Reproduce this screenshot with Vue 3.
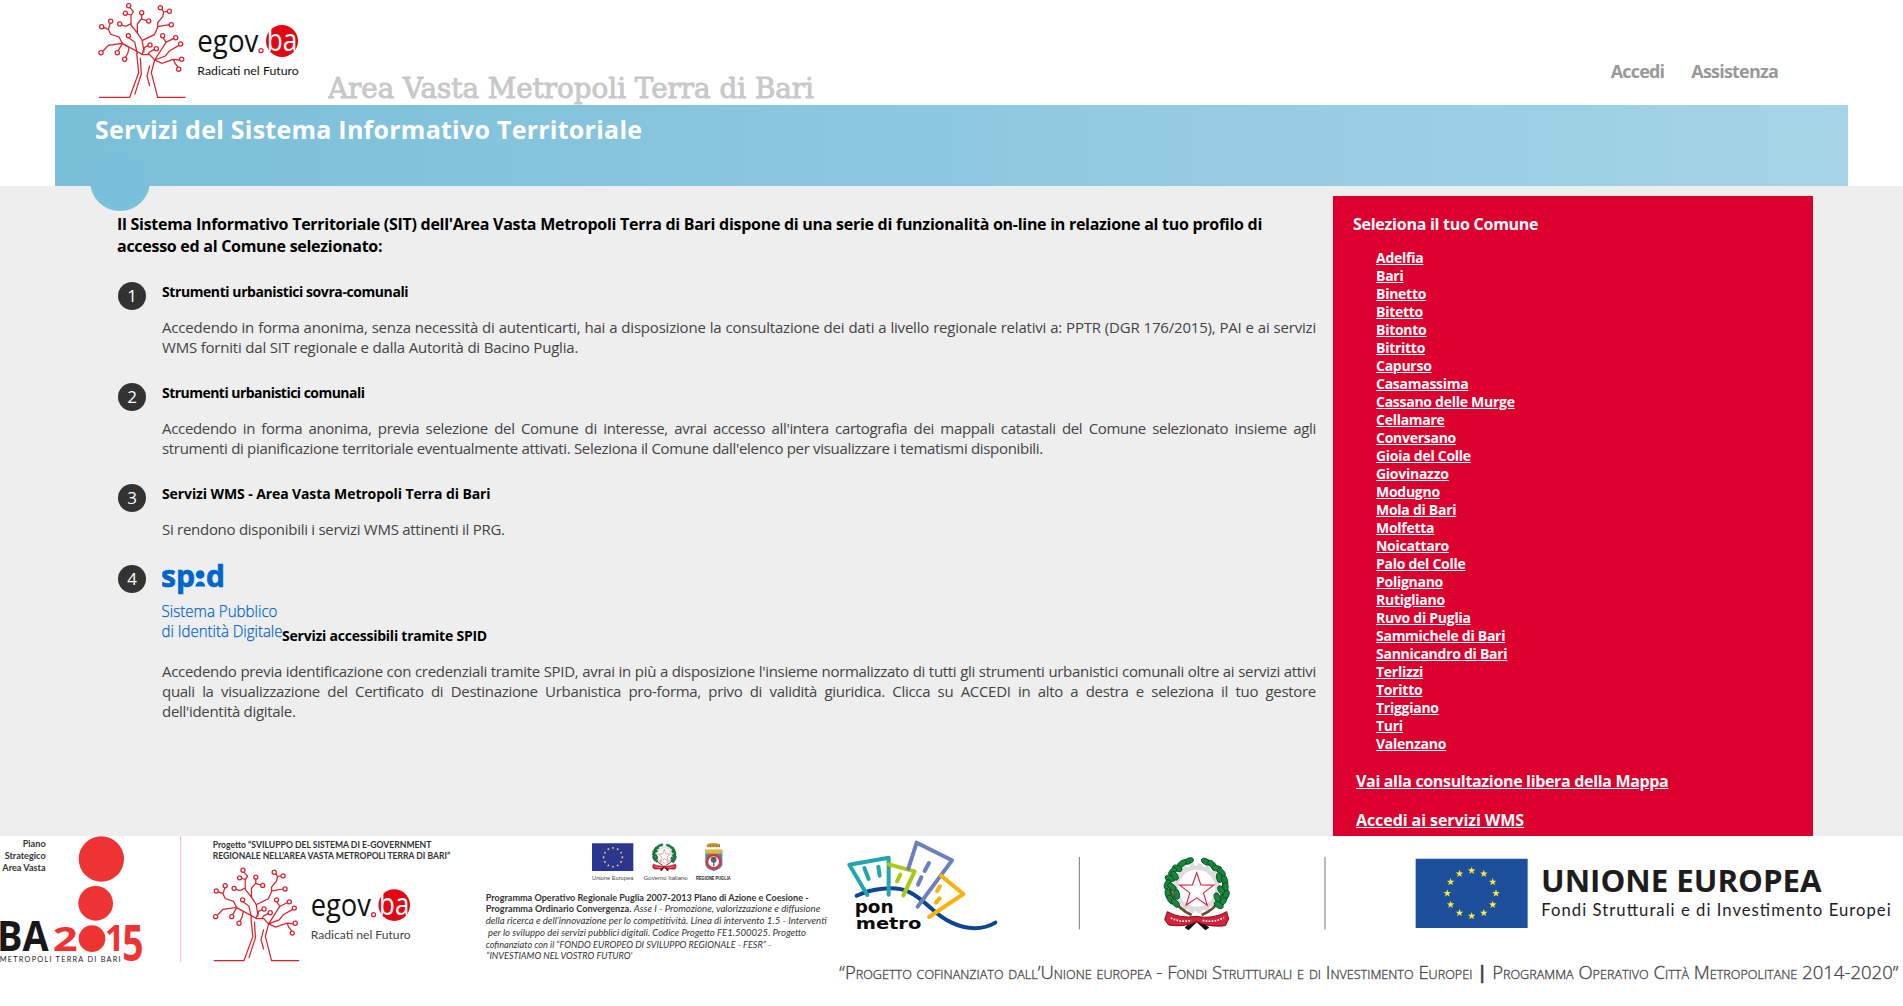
<script setup>
const comuni = [
  'Adelfia', 'Bari', 'Binetto', 'Bitetto', 'Bitonto', 'Bitritto', 'Capurso', 'Casamassima',
  'Cassano delle Murge', 'Cellamare', 'Conversano', 'Gioia del Colle', 'Giovinazzo', 'Modugno',
  'Mola di Bari', 'Molfetta', 'Noicattaro', 'Palo del Colle', 'Polignano', 'Rutigliano',
  'Ruvo di Puglia', 'Sammichele di Bari', 'Sannicandro di Bari', 'Terlizzi', 'Toritto',
  'Triggiano', 'Turi', 'Valenzano',
]

// track / textTrack: letter spacing in px of the title and of its paragraph
const services = [
  {
    n: 1,
    track: -0.42,
    textTrack: -0.2,
    title: 'Strumenti urbanistici sovra-comunali',
    text: 'Accedendo in forma anonima, senza necessità di autenticarti, hai a disposizione la consultazione dei dati a livello regionale relativi a: PPTR (DGR 176/2015), PAI e ai servizi WMS forniti dal SIT regionale e dalla Autorità di Bacino Puglia.',
  },
  {
    n: 2,
    track: -0.53,
    textTrack: -0.32,
    title: 'Strumenti urbanistici comunali',
    text: "Accedendo in forma anonima, previa selezione del Comune di interesse, avrai accesso all'intera cartografia dei mappali catastali del Comune selezionato insieme agli strumenti di pianificazione territoriale eventualmente attivati. Seleziona il Comune dall'elenco per visualizzare i tematismi disponibili.",
  },
  {
    n: 3,
    track: -0.1,
    textTrack: -0.28,
    title: 'Servizi WMS - Area Vasta Metropoli Terra di Bari',
    text: 'Si rendono disponibili i servizi WMS attinenti il PRG.',
  },
  {
    n: 4,
    spid: true,
    track: -0.23,
    textTrack: -0.3,
    title: 'Servizi accessibili tramite SPID',
    text: "Accedendo previa identificazione con credenziali tramite SPID, avrai in più a disposizione l'insieme normalizzato di tutti gli strumenti urbanistici comunali oltre ai servizi attivi quali la visualizzazione del Certificato di Destinazione Urbanistica pro-forma, privo di validità giuridica. Clicca su ACCEDI in alto a destra e seleziona il tuo gestore dell'identità\u00a0digitale.",
  },
]

const treeNodes = [
  [235, 17], [225, 40], [274, 38], [330, 23], [357, 34], [181, 64], [154, 80], [208, 72],
  [295, 63], [363, 74], [234, 107], [337, 107], [376, 113], [391, 132], [299, 135],
  [152, 158], [201, 158], [318, 146], [223, 178], [394, 178], [385, 208],
]

// Five-pointed star outline around a centre point
function star(cx, cy, r, inner = 0.4) {
  const pts = []
  for (let i = 0; i < 10; i++) {
    const a = (Math.PI / 5) * i - Math.PI / 2
    const k = i % 2 ? r * inner : r
    pts.push(`${(cx + k * Math.cos(a)).toFixed(1)},${(cy + k * Math.sin(a)).toFixed(1)}`)
  }
  return pts.join(' ')
}

// Twelve stars on an ellipse, as on the European flag
function ring(cx, cy, rx, ry, r) {
  return Array.from({ length: 12 }, (_, i) => {
    const a = (Math.PI / 6) * i
    return star(cx + rx * Math.cos(a), cy + ry * Math.sin(a), r)
  })
}

const smallRing = ring(429, 97, 28, 28, 4.5)
const bigRing = ring(1925, 205, 73, 68, 12)

// Olive and oak leaves of the Italian emblem: x, y, rotation
const leaves = [
  [1076, 106, -20], [1056, 114, -35], [1042, 128, 20], [1028, 138, -50], [1020, 158, 15],
  [1034, 150, 60], [1012, 176, -70], [1026, 184, 40], [1014, 204, 80], [1022, 222, 55],
  [1036, 232, 50], [1040, 206, 80], [1128, 108, 25], [1146, 116, 40], [1160, 128, 10],
  [1174, 140, 50], [1168, 156, 80], [1184, 164, 75], [1186, 186, 95], [1174, 194, 60],
  [1188, 208, 110], [1178, 228, 130], [1162, 216, 70], [1166, 238, 30],
]
const beads = [0, 1, 2, 3, 4]
</script>

<template>
  <div class="page">
    <svg class="defs" width="0" height="0" aria-hidden="true">
      <symbol id="egov" viewBox="140 0 620 300">
        <g class="tree">
          <path d="M146 292H238L265 218 259 160 M270 173 273 222 253 284 M406 292H322L303 218 313 180 M298 197 290 228 298 258" />
          <path d="M180 70 174 88 181 103 206 111 216 130 277 164H298L313 180 335 190 368 178 388 180 M160 82 174 88 M158 153 174 136 216 130 204 152 M216 131 236 142 233 158 226 172" />
          <path d="M238 22 249 35 242 46V75L260 98 275 120 280 148 275 164 M231 42 242 45 M214 75 226 79 242 71 M274 44V56L261 72V98 M274 57 289 62 M235 113 253 126 261 162" />
          <path d="M335 28 340 36 337 50 322 68V82L312 104 275 122 M340 36 350 34 M322 80 357 74 M293 137 282 142 280 158 M312 148 298 156 292 164" />
          <path d="M338 113 347 127 313 180 M370 115 347 127 M386 136 358 152 345 168 313 180 M370 179 374 190 383 201" />
          <circle v-for="(p, i) in treeNodes" :key="i" :cx="p[0]" :cy="p[1]" r="6.3" />
          <circle cx="632" cy="152" r="6" />
        </g>
        <circle cx="695" cy="123" r="48" fill="#e30613" />
        <text class="os" x="441" y="155" font-size="92" textLength="183" lengthAdjust="spacingAndGlyphs" fill="#111">egov</text>
        <text class="os" x="649" y="153" font-size="92" textLength="92" lengthAdjust="spacingAndGlyphs" fill="#fff">ba</text>
        <text class="lato" x="441" y="226" font-size="36" textLength="304" lengthAdjust="spacingAndGlyphs" fill="currentColor">Radicati nel Futuro</text>
      </symbol>
      <symbol id="emblem" viewBox="1000 90 200 230">
        <circle cx="1100" cy="188" r="62" fill="none" stroke="#dcdcde" stroke-width="13" />
        <circle cx="1100" cy="188" r="71" fill="none" stroke="#dcdcde" stroke-width="9" stroke-dasharray="13 11" />
        <path d="M1022 150Q1010 235 1085 268 M1178 150Q1192 235 1115 268" fill="none" stroke="#6d4a33" stroke-width="8" />
        <ellipse v-for="(l, i) in leaves" :key="i" :cx="l[0]" :cy="l[1]" rx="15" ry="8.5" :transform="`rotate(${l[2]} ${l[0]} ${l[1]})`" fill="#128a3c" stroke="#0c4722" stroke-width="2.5" />
        <polygon :points="star(1100, 195, 54)" fill="#fff" stroke="#dc2440" stroke-width="3.5" />
        <path d="M1085 284 1064 306 1076 314 1100 290 1126 314 1138 306 1114 284Z" fill="#151515" />
        <path d="M1012 258Q1052 280 1098 272Q1148 282 1190 258L1196 280 1186 300Q1140 306 1100 288Q1060 306 1016 298L1004 282Z" fill="#d8203a" stroke="#7c1020" stroke-width="3" />
        <path d="M1022 277Q1055 292 1084 284 M1118 284Q1150 292 1182 276" fill="none" stroke="#fff" stroke-width="5" stroke-dasharray="5 4" />
      </symbol>
    </svg>

    <header class="top">
      <svg class="logo" viewBox="140 0 620 300"><use href="#egov" x="140" y="0" width="620" height="300" /></svg>
      <svg class="area" viewBox="0 0 490 35">
        <text x="0" y="28" font-size="28" textLength="486" lengthAdjust="spacingAndGlyphs">Area Vasta Metropoli Terra di Bari</text>
      </svg>
      <nav class="nav">
        <a>Accedi</a>
        <a>Assistenza</a>
      </nav>
    </header>

    <div class="band"><h1>Servizi del Sistema Informativo Territoriale</h1></div>

    <main class="main">
      <section class="content">
        <p class="intro">Il Sistema Informativo Territoriale (SIT) dell'Area Vasta Metropoli Terra di Bari dispone di una serie di funzionalità on-line in relazione al tuo profilo di<br />accesso ed al Comune selezionato:</p>
        <article v-for="s in services" :key="s.n" class="service">
          <span class="num">{{ s.n }}</span>
          <div class="body">
            <h2>
              <svg v-if="s.spid" class="spid" viewBox="0 0 121 80">
                <g class="ti" font-weight="700" stroke="#06c" stroke-width="0.7">
                  <text x="-1" y="24" font-size="31" textLength="34" lengthAdjust="spacingAndGlyphs">sp</text>
                  <text x="44" y="24" font-size="31" textLength="19" lengthAdjust="spacingAndGlyphs">d</text>
                </g>
                <circle cx="38.2" cy="11.5" r="4.3" />
                <path d="M33.3 23.5Q34.3 18.6 38.3 18.6T43.3 23.5Z" />
                <g class="ti" font-size="16.5" font-weight="300" stroke="#06c" stroke-width="0.25">
                  <text x="-0.5" y="53.5" textLength="116" lengthAdjust="spacingAndGlyphs">Sistema Pubblico</text>
                  <text x="-0.5" y="73.5" textLength="121" lengthAdjust="spacingAndGlyphs">di Identità Digitale</text>
                </g>
              </svg>
              <span :style="{ letterSpacing: s.track + 'px' }">{{ s.title }}</span>
            </h2>
            <p :style="{ letterSpacing: s.textTrack + 'px' }">{{ s.text }}</p>
          </div>
        </article>
      </section>

      <aside class="panel">
        <h3>Seleziona il tuo Comune</h3>
        <ul>
          <li v-for="c in comuni" :key="c"><a>{{ c }}</a></li>
        </ul>
        <a class="more map">Vai alla consultazione libera della Mappa</a>
        <a class="more wms">Accedi ai servizi WMS</a>
      </aside>
    </main>

    <footer class="foot">
      <svg class="f-left" viewBox="0 33 1440 510">
        <g class="lato" font-weight="700" font-size="27" fill="#333">
          <text x="68" y="67" textLength="69" lengthAdjust="spacingAndGlyphs">Piano</text>
          <text x="14" y="103" textLength="123" lengthAdjust="spacingAndGlyphs">Strategico</text>
          <text x="7" y="138" textLength="130" lengthAdjust="spacingAndGlyphs">Area Vasta</text>
          <text x="638" y="68" textLength="656" lengthAdjust="spacingAndGlyphs">Progetto “SVILUPPO DEL SISTEMA DI E-GOVERNMENT</text>
          <text x="638" y="103" textLength="713" lengthAdjust="spacingAndGlyphs">REGIONALE NELL’AREA VASTA METROPOLI TERRA DI BARI”</text>
        </g>
        <g fill="#ee3432">
          <circle cx="304" cy="102" r="68" />
          <circle cx="287" cy="235" r="52" />
          <circle cx="276" cy="341" r="40" />
          <g class="os" font-weight="700">
            <text x="158" y="378" font-size="104" textLength="75" lengthAdjust="spacingAndGlyphs">2</text>
            <text x="315" y="378" font-size="106" textLength="58" lengthAdjust="spacingAndGlyphs">1</text>
            <text x="367" y="409" font-size="148" textLength="64" lengthAdjust="spacingAndGlyphs">5</text>
          </g>
        </g>
        <text class="os" x="-9" y="378" font-size="123" font-weight="700" textLength="155" lengthAdjust="spacingAndGlyphs" fill="#1a1718">BA</text>
        <text class="lato" x="-1" y="411" font-size="22" textLength="363" fill="#222">METROPOLI TERRA DI BARI</text>
        <path d="M542 33V411" stroke="#f3b9b9" stroke-width="3" />
        <use class="grey" href="#egov" x="635" y="119" width="612" height="296" />
      </svg>

      <svg class="f-mid" viewBox="30 33 1065 510">
        <path d="M366 55H490V138H366Z" fill="#2c3590" />
        <polygon v-for="(p, i) in smallRing" :key="i" :points="p" fill="#f4e36a" />
        <use href="#emblem" x="544" y="54" width="78" height="86" />
        <g>
          <path d="M712 57Q731 51 750 57V67H712Z" fill="#c9993c" />
          <path d="M706 74H757V118Q757 132 731 138Q706 132 706 118Z" fill="#3e8fc4" />
          <path d="M706 74H757V86H706Z" fill="#e5b536" />
          <circle cx="731" cy="110" r="20" fill="#fff" stroke="#d9363e" stroke-width="8" />
          <circle cx="731" cy="104" r="9" fill="#52656a" />
          <path d="M731 105V124" stroke="#52656a" stroke-width="4" />
          <path v-for="b in beads" :key="b" :d="`M${712 + b * 9} 60v5`" stroke="#8d6420" stroke-width="3" />
        </g>
        <g class="ari" font-size="17" fill="#444">
          <text x="366" y="165" textLength="124" lengthAdjust="spacingAndGlyphs">Unione Europea</text>
          <text x="521" y="165" textLength="132" lengthAdjust="spacingAndGlyphs">Governo Italiano</text>
          <text x="678" y="164" font-size="14" font-weight="700" textLength="104" lengthAdjust="spacingAndGlyphs" fill="#222">REGIONE PUGLIA</text>
        </g>
        <g class="lato" font-size="27.5" fill="#333">
          <g font-weight="700">
            <text x="47" y="227" textLength="969" lengthAdjust="spacingAndGlyphs">Programma Operativo Regionale Puglia 2007-2013 Plano di Azione e Coesione -</text>
            <text x="47" y="262" textLength="437" lengthAdjust="spacingAndGlyphs">Programma Ordinario Convergenza.</text>
          </g>
          <g font-style="italic">
            <text x="491" y="262" textLength="560" lengthAdjust="spacingAndGlyphs">Asse I - Promozione, valorizzazione e diffusione</text>
            <text x="47" y="298" textLength="1023" lengthAdjust="spacingAndGlyphs">della ricerca e dell’innovazione per lo competitività. Linea di intervento 1.5 - Interventi</text>
            <text x="54" y="333" textLength="954" lengthAdjust="spacingAndGlyphs">per lo sviluppo dei servizi pubblici digitali. Codice Progetto FE1.500025. Progetto</text>
            <text x="47" y="368" textLength="857" lengthAdjust="spacingAndGlyphs">cofinanziato con il “FONDO EUROPEO DI SVILUPPO REGIONALE - FESR” -</text>
            <text x="49" y="403" textLength="438" lengthAdjust="spacingAndGlyphs">“INVESTIAMO NEL VOSTRO FUTURO'</text>
          </g>
        </g>
      </svg>

      <svg class="f-right" viewBox="15 33 3204 510">
        <g fill="none" stroke-width="12" stroke-linecap="round" stroke-linejoin="round">
          <path d="M80 212C120 192 195 180 235 200C290 225 310 270 365 293C410 315 460 315 496 293" stroke="#0d4595" />
          <path d="M176 209V98L58 119 112 210 M103 129 116 162 M145 125 149 152" stroke="#21a5ae" />
          <path d="M176 118 254 139 220 211 M211 149 201 169" stroke="#adc815" />
          <path d="M235 131 260 53 366 106 263 245 M297 114 284 138 M274 157 264 179" stroke="#6b80bd" />
          <path d="M333 152 400 207 297 276 M330 184 321 199 M329 220 318 233" stroke="#f8b20d" />
        </g>
        <g class="duru" font-weight="700" fill="#0a0a0a">
          <text x="74" y="265" font-size="52" textLength="117" lengthAdjust="spacingAndGlyphs">pon</text>
          <text x="77" y="311" font-size="50" textLength="197" lengthAdjust="spacingAndGlyphs">metro</text>
        </g>
        <path d="M748 96V313M1485 96V313" stroke="#777" stroke-width="3" />
        <use href="#emblem" x="1000" y="92" width="200" height="230" />
        <path d="M1757 101H2093V309H1757Z" fill="#1d4f9c" />
        <polygon v-for="(p, i) in bigRing" :key="i" :points="p" fill="#f7ec3a" />
        <text class="os" x="2133" y="200" font-size="93" font-weight="700" textLength="842" lengthAdjust="spacingAndGlyphs" fill="#1e1c1d">UNIONE EUROPEA</text>
        <text class="lato" x="2134" y="272" font-size="50" textLength="1048" lengthAdjust="spacing" fill="#1e1c1d">Fondi Strutturali e di Investimento Europei</text>
        <text class="caps" x="28" y="461" font-size="53" textLength="3177" lengthAdjust="spacingAndGlyphs" fill="#444">“Progetto cofinanziato dall’Unione europea - Fondi Strutturali e di Investimento Europei <tspan font-weight="700">|</tspan> Programma Operativo Città Metropolitane 2014-2020”</text>
      </svg>
    </footer>
  </div>
</template>

<style>
body { margin: 0; background: #fff; }
</style>

<style scoped>
.page {
  width: 1903px;
  height: 1006px;
  overflow: hidden;
  font-family: "Open Sans", "Noto Sans", sans-serif;
  background: #fff;
}
h1, h2, h3, p, ul { margin: 0; padding: 0; }
.defs { position: absolute; }
.os { font-family: "Open Sans", sans-serif; }
.lato { font-family: Lato, sans-serif; }
.ari { font-family: "Liberation Sans", sans-serif; }
.ti { font-family: "Open Sans", sans-serif; }
.duru { font-family: "DejaVu Sans", sans-serif; }
.caps { font-family: "Open Sans", sans-serif; font-weight: 300; font-variant: small-caps; stroke: #444; stroke-width: 0.9; }
.tree { fill: none; stroke: #d8232f; stroke-width: 3.8; }

.top { display: flex; height: 105px; padding-left: 96.7px; }
.logo { width: 206.7px; height: 100px; color: #111; flex: none; }
.grey { color: #444; }
.area { width: 490px; height: 35px; margin: 70px 0 0 24.6px; flex: none; font-family: "DejaVu Serif", serif; fill: #c8c8c8; stroke: #c8c8c8; stroke-width: 0.9; }
.nav { display: flex; gap: 27px; margin: 59px 125px 0 auto; font-size: 18px; line-height: 25px; font-weight: 700; color: #999; letter-spacing: -0.8px; }

.band {
  box-sizing: border-box;
  width: 1793px;
  height: 81px;
  margin-left: 55px;
  padding: 7px 0 0 40px;
  position: relative;
  z-index: 0;
  background: linear-gradient(90deg, #7abfd9, #8ec8e0 50%, #a5d4e6);
}
.band::after {
  content: "";
  position: absolute;
  left: 35px;
  top: 46px;
  width: 60px;
  height: 60px;
  border-radius: 50%;
  background: #7bc0da;
  z-index: -1;
}
h1 { font-size: 25px; line-height: 34px; color: #fff; letter-spacing: 0.25px; white-space: nowrap; }

.main { display: flex; height: 650px; background: #eee; }
.content { width: 1199px; padding: 27px 17px 0 117px; }
.intro { font-size: 16px; line-height: 22px; font-weight: 700; color: #000; letter-spacing: -0.275px; margin-bottom: 25px; white-space: nowrap; }
.service { display: flex; gap: 16px; margin-bottom: 26px; }
.num {
  flex: none;
  width: 28px;
  height: 28px;
  margin-left: 1px;
  border-radius: 50%;
  background: #333;
  color: #fff;
  font-size: 17px;
  line-height: 28px;
  text-align: center;
}
.body { flex: 1; }
h2 { display: flex; align-items: flex-end; font-size: 14px; line-height: 20px; font-weight: 700; color: #000; margin-bottom: 15px; }
.spid { width: 121px; height: 80px; margin: -2px -1px 3px 0; fill: #06c; }
.body p { font-size: 15px; line-height: 20px; color: #444; text-align: justify; }

.panel { box-sizing: border-box; width: 480px; height: 640px; margin-top: 10px; padding: 17px 0 0 20px; background: #dc002e; color: #fff; font-weight: 700; }
.panel h3 { font-size: 16px; line-height: 22px; letter-spacing: -0.26px; }
.panel ul { list-style: none; margin: 14px 0 0 23px; font-size: 14px; line-height: 18px; letter-spacing: -0.27px; }
.panel a { text-decoration: underline; }
.more { display: block; margin-left: 3px; font-size: 16px; line-height: 22px; }
.map { margin-top: 17px; letter-spacing: -0.33px; }
.wms { margin-top: 17px; letter-spacing: -0.08px; }

.foot { display: flex; height: 170px; background: #fff; }
.f-left { width: 480px; height: 170px; flex: none; }
.f-mid { width: 355px; height: 170px; flex: none; }
.f-right { width: 1068px; height: 170px; flex: none; }
</style>
